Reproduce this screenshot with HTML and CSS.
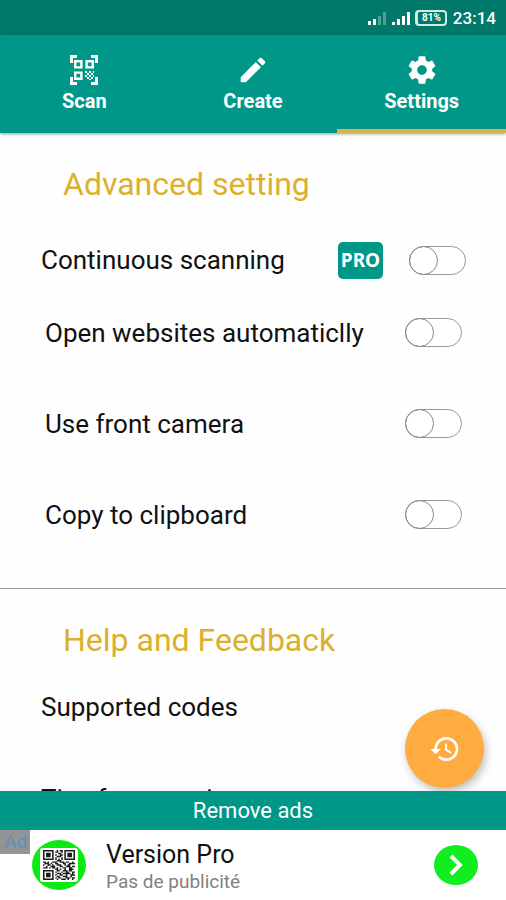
FILE: index.html
```html
<!DOCTYPE html>
<html lang="en">
<head>
  <meta charset="UTF-8">
  <meta name="viewport" content="width=device-width, initial-scale=1.0">
  <title>Settings</title>
  <link rel="stylesheet" href="styles.css">
</head>
<body>
  <div class="statusbar">
    <svg class="signal" width="20" height="14" viewBox="0 0 20 14">
      <path fill="#fff" d="M1 10h3v4H1zM6 8h3v6H6z"/>
      <path fill="#fff" opacity=".3" d="M11 5h3v9h-3zM16 1h3v13h-3z"/>
    </svg>
    <svg class="signal" width="20" height="14" viewBox="0 0 20 14">
      <path fill="#fff" d="M1 11h3v3H1zM6 8h3v6H6zM11 5h3v9h-3zM16 1h3v13h-3z"/>
    </svg>
    <span class="battery">81%</span>
    <span class="clock">23:14</span>
  </div>

  <nav class="tabs">
    <a class="tab" href="#scan">
      <svg width="28" height="30" viewBox="0 0 28 30">
        <path fill="#fff" d="M0 0h7v3H3v5H0zM21 0h7v8h-3V3h-4zM0 22h3v5h4v3H0zM25 22h3v8h-7v-3h4z"/>
        <path fill="none" stroke="#fff" stroke-width="2.4" d="M5.200 6.200h6.200v6.200H5.200zM16.600 6.200h6.200v6.200h-6.200zM5.200 17.600h6.200v6.200H5.200z"/>
        <path fill="#fff" d="M15 16h2v2h-2zM19 16h2v2h-2zM23 16h1v2h-1zM17 18h2v2h-2zM21 18h2v2h-2zM15 20h2v2h-2zM19 20h2v2h-2zM23 20h1v2h-1zM17 22h2v2h-2zM21 22h2v2h-2zM19 24h2v1h-2z"/>
      </svg>
      Scan
    </a>
    <a class="tab" href="#create">
      <svg width="34" height="30" viewBox="1 1 22 22">
        <path fill="#fff" d="M3 17.250V21h3.750L17.810 9.940l-3.750-3.750L3 17.250zM20.710 7.040a1 1 0 0 0 0-1.410l-2.340-2.340a1 1 0 0 0-1.410 0l-1.830 1.830 3.750 3.750 1.830-1.830z"/>
      </svg>
      Create
    </a>
    <a class="tab active" href="#settings">
      <svg width="34" height="30" viewBox="1 1 22 22">
        <path fill="#fff" d="M19.430 12.980c.040-.320.070-.640.070-.980s-.030-.660-.070-.980l2.110-1.650c.190-.150.240-.420.120-.640l-2-3.460c-.120-.220-.390-.300-.610-.220l-2.490 1c-.520-.400-1.080-.730-1.690-.980l-.380-2.650C14.460 2.180 14.250 2 14 2h-4c-.250 0-.460.180-.490.420l-.380 2.650c-.610.250-1.170.590-1.690.980l-2.490-1c-.230-.090-.490 0-.610.220l-2 3.460c-.130.220-.070.490.120.640l2.110 1.650c-.040.320-.070.650-.070.980s.030.660.070.980l-2.110 1.650c-.190.150-.240.420-.120.640l2 3.460c.120.220.390.300.610.220l2.490-1c.520.400 1.080.730 1.690.980l.380 2.650c.030.240.240.420.490.420h4c.250 0 .460-.180.490-.420l.380-2.650c.610-.250 1.170-.590 1.690-.980l2.490 1c.230.090.490 0 .610-.220l2-3.460c.120-.220.070-.490-.120-.640l-2.110-1.650zM12 15.500c-1.930 0-3.500-1.570-3.500-3.500s1.570-3.500 3.500-3.500 3.500 1.570 3.500 3.500-1.570 3.500-3.500 3.500z"/>
      </svg>
      Settings
    </a>
  </nav>

  <main class="content">
    <section class="section">
      <h2 class="heading">Advanced setting</h2>
      <div class="row row-pro">
        <label for="continuous">Continuous scanning</label>
        <span class="pro">PRO</span>
        <input class="switch" type="checkbox" id="continuous">
      </div>
      <div class="row">
        <label for="websites">Open websites automaticlly</label>
        <input class="switch" type="checkbox" id="websites">
      </div>
      <div class="row">
        <label for="camera">Use front camera</label>
        <input class="switch" type="checkbox" id="camera">
      </div>
      <div class="row">
        <label for="clipboard">Copy to clipboard</label>
        <input class="switch" type="checkbox" id="clipboard">
      </div>
    </section>

    <section class="section help">
      <h2 class="heading">Help and Feedback</h2>
      <a class="link" href="#codes">Supported codes</a>
      <a class="link" href="#tips">Tips for scanning</a>
    </section>

    <button class="fab" aria-label="History">
      <svg width="32" height="32" viewBox="0 0 24 24">
        <path fill="#fff" d="M13 3a9 9 0 0 0-9 9H1l3.890 3.890.070.140L9 12H6c0-3.870 3.130-7 7-7s7 3.130 7 7-3.130 7-7 7c-1.930 0-3.680-.790-4.940-2.060l-1.420 1.420A8.950 8.950 0 0 0 13 21a9 9 0 0 0 0-18zm-1 5v5l4.280 2.540.720-1.210-3.500-2.080V8H12z"/>
      </svg>
    </button>
  </main>

  <button class="remove">Remove ads</button>

  <div class="ad">
    <span class="ad-tag">Ad</span>
    <svg class="ad-logo" width="54" height="50" viewBox="0 0 54 50">
      <ellipse cx="27" cy="25" rx="27" ry="25" fill="#0bea12"/>
      <rect x="8" y="8" width="38" height="34" rx="3" fill="#fff"/>
      <!-- 21 x 21 modules -->
      <svg x="11" y="10" width="32" height="30" viewBox="0 0 21 21" preserveAspectRatio="none">
        <path fill="none" stroke="#1c1c1c" d="M.5.5h6v6h-6zM14.500.5h6v6h-6zM.5 14.500h6v6h-6z"/>
        <path fill="#1c1c1c" d="M2 2h3v3H2zM16 2h3v3h-3zM2 16h3v3H2z"/>
        <path fill="none" stroke="#1c1c1c" d="M9 .5h1m1 0h2M8 1.500h2m2 0h1M10 2.500h2M8 3.500h1m2 0h2M9 4.500h3M8 5.500h1m3 0h1M8 6.500h1m1 0h1m1 0h1M9 7.500h3M0 8.500h2m1 0h1m2 0h3m2 0h3m1 0h2m2 0h1M1 9.500h3m1 0h1m2 0h2m3 0h2m2 0h4M0 10.500h1m2 0h2m1 0h1m2 0h3m2 0h1m1 0h2M2 11.500h1m2 0h3m3 0h2m2 0h3m1 0h2M0 12.500h3m1 0h1m1 0h2m1 0h1m3 0h2m2 0h2M8 13.500h2m1 0h1m2 0h1m2 0h3M9 14.500h2m2 0h3m1 0h2M8 15.500h1m3 0h1m2 0h2m2 0h2M9 16.500h3m1 0h5m1 0h1M8 17.500h1m2 0h2m2 0h1m2 0h3M9 18.500h2m2 0h3m2 0h1M8 19.500h1m1 0h2m3 0h3m1 0h2M9 20.500h1m2 0h3m1 0h1m2 0h1"/>
      </svg>
    </svg>
    <div class="ad-text">
      <div class="ad-title">Version Pro</div>
      <div class="ad-sub">Pas de publicité</div>
    </div>
    <button class="ad-go" aria-label="Open">
      <svg width="16" height="22" viewBox="0 0 16 22">
        <path fill="none" stroke="#fff" stroke-width="4" d="M3 2l9 9-9 9"/>
      </svg>
    </button>
  </div>
</body>
</html>
```
FILE: styles.css
```css
* {
  box-sizing: border-box;
}
body {
  margin: 0;
  height: 100vh;
  display: flex;
  flex-direction: column;
  overflow: hidden;
  font-family: Roboto, sans-serif;
  background: #fefefe;
  color: #111;
}
button {
  border: none;
  padding: 0;
  font-family: inherit;
  cursor: pointer;
}
a {
  color: inherit;
  text-decoration: none;
}

/* status bar */
.statusbar {
  flex: none;
  height: 35px;
  padding: 0 10px;
  display: flex;
  align-items: center;
  justify-content: flex-end;
  gap: 4px;
  background: #00796b;
  color: #fff;
}
.battery {
  width: 32px;
  height: 16px;
  border: 2px solid #d5e9e6;
  border-left-width: 3px;
  border-radius: 4px;
  font-size: 10px;
  line-height: 12px;
  font-weight: bold;
  text-align: center;
}
.clock {
  margin-left: 2px;
  font-size: 17px;
  font-weight: 500;
}

/* tabs */
.tabs {
  flex: none;
  height: 98px;
  display: flex;
  background: #009688;
  box-shadow: 0 1px 3px rgba(0, 0, 0, 0.4);
  z-index: 1;
}
.tab {
  flex: 1;
  display: flex;
  flex-direction: column;
  align-items: center;
  gap: 4px;
  padding-top: 20px;
  border-bottom: 4px solid transparent;
  color: #fff;
  font-size: 20px;
  line-height: 24px;
  font-weight: bold;
}
.tab.active {
  border-bottom-color: #dcae52;
}

/* settings */
.content {
  flex: 1;
  min-height: 0;
  position: relative;
  overflow: hidden;
}
.section {
  padding: 31px 44px 28px;
}
.help {
  border-top: 1px solid #999;
  padding-left: 41px;
}
.heading {
  margin: 0 0 29px 19px;
  font-size: 32px;
  line-height: 40px;
  font-weight: normal;
  color: #dbb02f;
}
.help .heading {
  margin: 0 0 3px 22px;
}
.row {
  height: 91px;
  display: flex;
  align-items: center;
  justify-content: space-between;
  font-size: 26px;
  padding-left: 1px;
}
.row-pro {
  height: 54px;
  margin: 0 -4px;
}
.pro {
  margin-left: auto;
  margin-right: 26px;
  width: 45px;
  border-radius: 5px;
  background: #009688;
  color: #fff;
  font: bold 19px/37px "Noto Sans", sans-serif;
  text-align: center;
}
.switch {
  appearance: none;
  flex: none;
  margin: 0;
  width: 57px;
  height: 29px;
  border: 1px solid #999;
  border-radius: 15px;
  background: #fff;
}
.switch::before {
  content: "";
  display: block;
  width: 29px;
  height: 29px;
  margin: -1px;
  box-sizing: border-box;
  border: 1px solid #888;
  border-radius: 50%;
}
.switch:checked::before {
  margin-left: 27px;
  background: #009688;
}
.link {
  display: flex;
  align-items: center;
  height: 88px;
  font-size: 26px;
}
.link + .link {
  margin-top: 4px;
}
.fab {
  position: absolute;
  right: 22px;
  bottom: 3px;
  width: 79px;
  height: 79px;
  display: flex;
  align-items: center;
  justify-content: center;
  border-radius: 50%;
  background: #ffab40;
  box-shadow: 2px 4px 8px rgba(0, 0, 0, 0.25);
}

/* bottom */
.remove {
  flex: none;
  height: 39px;
  background: #009688;
  color: #fff;
  font-size: 22px;
}
.ad {
  flex: none;
  height: 70px;
  display: flex;
  align-items: center;
  position: relative;
  padding: 0 28px 0 32px;
  background: #fff;
}
.ad-tag {
  position: absolute;
  left: 0;
  top: 0;
  width: 30px;
  padding-left: 4px;
  background: #949494;
  color: #5a93c4;
  font-size: 19px;
  line-height: 24px;
}
.ad-logo {
  flex: none;
  position: relative;
}
.ad-text {
  flex: 1;
  margin-left: 20px;
  padding-top: 5px;
}
.ad-title {
  font-size: 25px;
  line-height: 28px;
}
.ad-sub {
  font-size: 19px;
  line-height: 26px;
  color: #808080;
}
.ad-go {
  width: 44px;
  height: 40px;
  display: flex;
  align-items: center;
  justify-content: center;
  border-radius: 50%;
  background: #10ee20;
}
```
